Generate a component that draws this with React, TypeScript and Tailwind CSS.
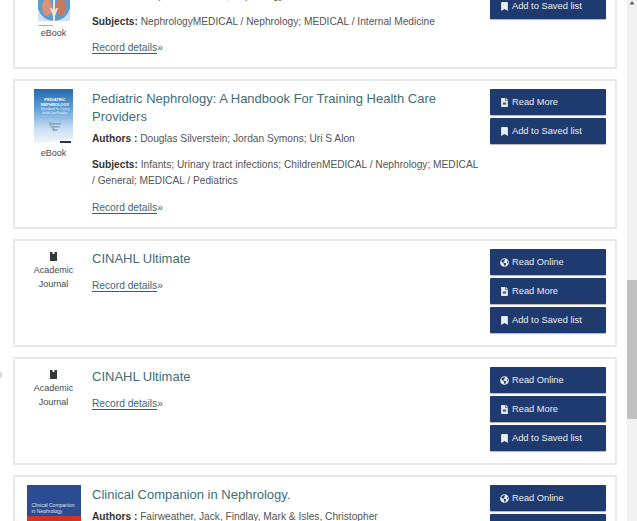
import React from "react";
import { FaBookmark, FaFileAlt, FaGlobeAmericas } from "react-icons/fa";

const ActionButton = ({ icon, label }: { icon: React.ReactNode; label: string }) => (
  <button className="flex h-[26px] w-[116px] items-center gap-[3px] rounded-[1px] bg-[#1e3a6e] pl-[10px] text-[9.3px] text-[#e8edf5] shadow-[0_1px_1px_rgba(0,0,0,0.3)]">
    <span className="flex w-[9px] justify-center text-[9px]">{icon}</span>
    <span className="pt-[2px]">{label}</span>
  </button>
);

const ReadOnline = () => <ActionButton icon={<FaGlobeAmericas />} label="Read Online" />;
const ReadMore = () => <ActionButton icon={<FaFileAlt />} label="Read More" />;
const AddSaved = () => <ActionButton icon={<FaBookmark />} label="Add to Saved list" />;

const RecordLink = () => (
  <a className="block text-[10.2px] leading-[16px] text-[#3a6a78]">
    <span className="underline decoration-[#2c6272] underline-offset-2">Record details</span>»
  </a>
);

const Meta = ({ label, children, className = "" }: { label: string; children: React.ReactNode; className?: string }) => (
  <p className={`text-[10.2px] leading-[16px] text-[#555] ${className}`}>
    <b className="font-bold text-[#333]">{label}</b> {children}
  </p>
);

const Title = ({ children }: { children: React.ReactNode }) => (
  <h3 className="mb-[5px] text-[13px] font-normal leading-[18px] text-[#3f6d78]">{children}</h3>
);

const Card = ({
  thumb,
  buttons,
  children,
  className = "",
}: {
  thumb: React.ReactNode;
  buttons: React.ReactNode;
  children: React.ReactNode;
  className?: string;
}) => (
  <div className={`flex border-2 border-[#e8e8e8] pb-[12px] pt-[8px] ${className}`}>
    <div className="flex w-[77px] shrink-0 flex-col items-center text-center text-[9px] text-[#4a4a4a]">{thumb}</div>
    <div className="min-w-0 flex-1 pr-[10px] pt-[1px]">{children}</div>
    <div className="mr-[9px] flex w-[116px] shrink-0 flex-col gap-[3px]">{buttons}</div>
  </div>
);

const JournalThumb = () => (
  <>
    <svg viewBox="0 0 7 9" className="mt-[3px] h-[9px] w-[7px]">
      <path d="M0 0 H2.5 V2 H4.5 V0 H7 V9 H0 Z" fill="#33363b" />
    </svg>
    <span className="mt-[2px] leading-[14px]">
      Academic
      <br />
      Journal
    </span>
  </>
);

const KidneyCover = () => (
  <>
    <div className="h-[62px] w-[32px] shrink-0">
      <svg viewBox="0 0 32 57" className="h-[57px] w-[32px] blur-[0.6px]">
        <rect width="32" height="57" fill="#cfe1ee" />
        <ellipse cx="16" cy="38" rx="17" ry="19" fill="#5f9bc9" />
        <ellipse cx="9" cy="43" rx="5" ry="9" fill="#d9917a" />
        <ellipse cx="23" cy="43" rx="5" ry="9" fill="#c9795f" />
        <path d="M16 32 V57 M13 44 L16 52 L19 44" stroke="#f1e3c9" strokeWidth="2" fill="none" />
      </svg>
      <div className="mt-[4px] h-[1px] w-[15px] bg-[#9bbf8e]" />
    </div>
    <span className="leading-[14px]">eBook</span>
  </>
);

const PediatricCover = () => (
  <>
    <div className="relative h-[55px] w-[39px] overflow-hidden bg-[linear-gradient(180deg,#2469ad_0,#5f9fd8_35%,#c9def1_72%,#f3f7fb_100%)] text-center text-white">
      <div className="pl-[3px] pt-[8px] text-[4px] font-bold leading-[5px]">
        PEDIATRIC
        <br />
        NEPHROLOGY
      </div>
      <div className="pl-[3px] pt-[1px] text-[2.6px] leading-[4px] text-[#e8f0f8]">
        A Handbook For Training
        <br />
        Health Care Providers
      </div>
      <div className="mt-[7px] pl-[3px] text-[2.6px] leading-[3px] text-[#5a6b80]">
        Silverstein
        <br />
        Symons
        <br />
        Alon
      </div>
      <div className="absolute bottom-0 left-0 h-[5px] w-[39px] bg-white [clip-path:polygon(0_100%,100%_0,100%_100%)]" />
      <div className="absolute bottom-[1px] right-[2px] h-[2px] w-[11px] bg-[#24344f]" />
    </div>
    <span className="mt-[2px] leading-[14px]">eBook</span>
  </>
);

const CompanionCover = () => (
  <div className="h-[70px] w-[54px] bg-[#2b4c92]">
    <div className="pl-[5px] pt-[17px] text-left text-[5px] leading-[6px] text-[#dfe6f3]">
      Clinical Companion
      <br />
      in Nephrology
    </div>
    <div className="mt-[2px] h-[40px] bg-[radial-gradient(circle_at_50%_70%,#1c3a5c_0,#5d7a3a_28%,#c4302b_50%,#d9352a_100%)]" />
  </div>
);

export default function App() {
  return (
    <div className="relative flex h-[521px] w-[637px] overflow-hidden bg-white font-['Liberation_Sans',Arial,sans-serif]">
      <div className="absolute -left-[2px] top-[372px] h-[6px] w-[4px] rounded-full bg-[#d8d8d8]" />
      <main className="flex w-[627px] shrink-0 flex-col gap-[10px] pl-[13px] pr-[10px]">
        <Card
          className="-mt-[46px] pb-[11px]!"
          thumb={<KidneyCover />}
          buttons={
            <>
              <ReadMore />
              <AddSaved />
            </>
          }
        >
          <Title>Nephrology</Title>
          <Meta label="Authors :" className="mb-[10px]">
            Hospital Handbook; Nephrology Team
          </Meta>
          <Meta label="Subjects:" className="mb-[10px]">
            NephrologyMEDICAL / Nephrology; MEDICAL / Internal Medicine
          </Meta>
          <RecordLink />
        </Card>

        <Card
          className="pb-[11px]!"
          thumb={<PediatricCover />}
          buttons={
            <>
              <ReadMore />
              <AddSaved />
            </>
          }
        >
          <Title>Pediatric Nephrology: A Handbook For Training Health Care Providers</Title>
          <Meta label="Authors :" className="mb-[10px]">
            Douglas Silverstein; Jordan Symons; Uri S Alon
          </Meta>
          <Meta label="Subjects:" className="mb-[11px]">
            Infants; Urinary tract infections; ChildrenMEDICAL / Nephrology; MEDICAL / General; MEDICAL / Pediatrics
          </Meta>
          <RecordLink />
        </Card>

        {[0, 1].map((i) => (
          <Card
            key={i}
            thumb={<JournalThumb />}
            buttons={
              <>
                <ReadOnline />
                <ReadMore />
                <AddSaved />
              </>
            }
          >
            <Title>CINAHL Ultimate</Title>
            <div className="pt-[5px]">
              <RecordLink />
            </div>
          </Card>
        ))}

        <Card
          thumb={<CompanionCover />}
          buttons={
            <>
              <ReadOnline />
              <ReadMore />
              <AddSaved />
            </>
          }
        >
          <Title>Clinical Companion in Nephrology.</Title>
          <Meta label="Authors :">Fairweather, Jack, Findlay, Mark &amp; Isles, Christopher</Meta>
        </Card>
      </main>

      <aside className="flex h-full w-[10px] shrink-0 flex-col bg-[#f1f1f1]">
        <svg viewBox="0 0 10 10" className="h-[10px] w-[10px]">
          <path d="M5 1 L7.5 4.5 H2.5 Z" fill="#606060" />
        </svg>
        <div className="mt-[270px] h-[139px] w-full bg-[#c1c1c1]" />
      </aside>
    </div>
  );
}
